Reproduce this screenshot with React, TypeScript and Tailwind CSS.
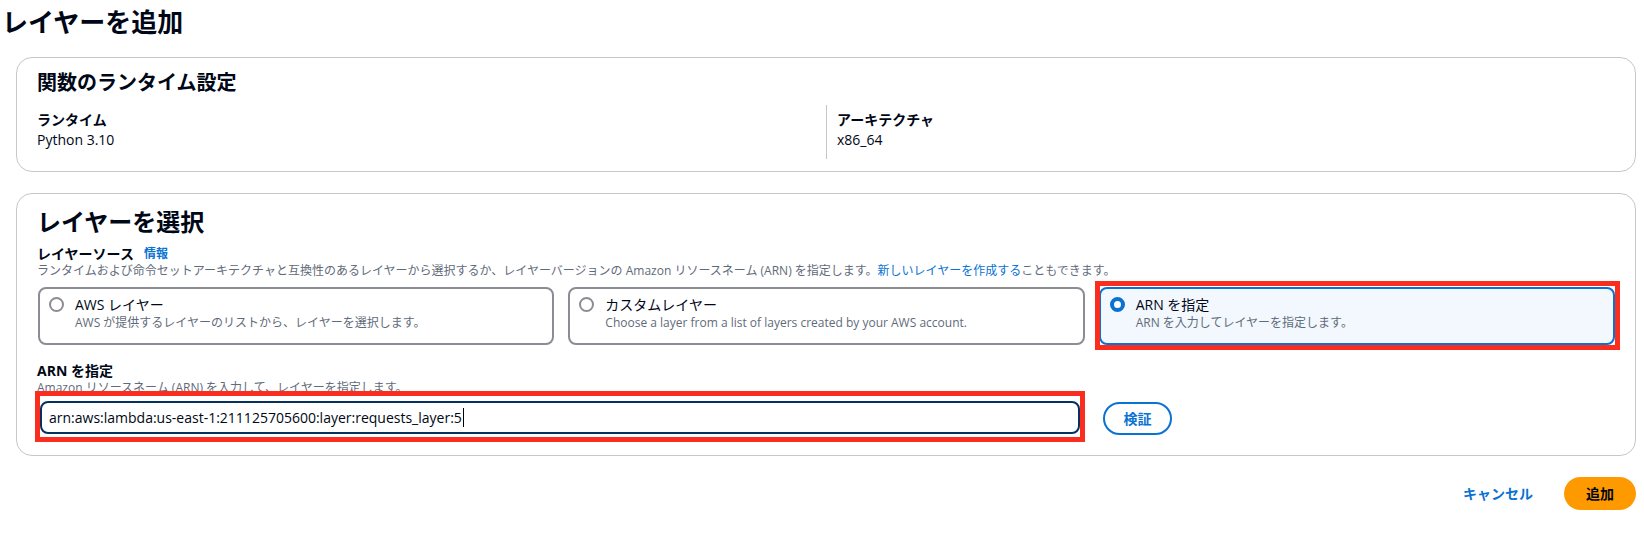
import { useState } from 'react'

const font = { fontFamily: '"Open Sans", "Noto Sans CJK JP", sans-serif' }

type Tile = {
  id: string
  title: string
  description: string
}

const tiles: Tile[] = [
  { id: 'aws', title: 'AWS レイヤー', description: 'AWS が提供するレイヤーのリストから、レイヤーを選択します。' },
  { id: 'custom', title: 'カスタムレイヤー', description: 'Choose a layer from a list of layers created by your AWS account.' },
  { id: 'arn', title: 'ARN を指定', description: 'ARN を入力してレイヤーを指定します。' },
]

function Radio({ checked }: { checked: boolean }) {
  if (checked) {
    return <span className="mt-[2px] block h-[15px] w-[15px] shrink-0 rounded-full border-[4px] border-[#0972d3] bg-white" />
  }
  return <span className="mt-[2px] block h-[15px] w-[15px] shrink-0 rounded-full border-2 border-[#8c8c94] bg-white" />
}

function SourceTile({ tile, selected }: { tile: Tile; selected: boolean }) {
  const box = selected
    ? 'border-2 border-[#0972d3] bg-[#f2f8fd]'
    : 'border-2 border-[#8c8c94] bg-white'

  return (
    <div className="relative">
      <div className={`flex h-[58px] gap-[11px] rounded-[8px] pl-[9px] pt-[6px] ${box}`}>
        <Radio checked={selected} />
        <div>
          <div className="text-[14px] leading-[20px] text-[#000716]">{tile.title}</div>
          <div className="text-[12px] leading-[16px] text-[#5f6b7a]">{tile.description}</div>
        </div>
      </div>
      {selected ? (
        <div className="pointer-events-none absolute -bottom-[5px] -left-[4px] -right-[5px] -top-[6px] border-[5px] border-[#fb2d1e]" />
      ) : null}
    </div>
  )
}

export default function App() {
  const [source] = useState('arn')

  return (
    <div className="min-h-[534px] bg-white text-[#000716]" style={font}>
      <h1 className="pl-[2px] pt-[7px] text-[26px] font-bold leading-[30px]">レイヤーを追加</h1>

      <div className="pl-4 pr-2 pt-[20px]">
        <section className="rounded-[16px] border border-[#c6c6cd] px-[20px] pb-[12px] pt-[13px]">
          <h2 className="text-[20px] font-bold leading-[24px]">関数のランタイム設定</h2>
          <div className="mt-[10px] grid grid-cols-2">
            <div className="pt-[5px]">
              <div className="text-[14px] font-bold leading-[20px]">ランタイム</div>
              <div className="text-[14px] leading-[20px]">Python 3.10</div>
            </div>
            <div className="h-[54px] border-l border-[#c6c6cd] pl-[10px] pt-[5px]">
              <div className="text-[14px] font-bold leading-[20px]">アーキテクチャ</div>
              <div className="text-[14px] leading-[20px]">x86_64</div>
            </div>
          </div>
        </section>

        <section className="mt-[21px] rounded-[16px] border border-[#c6c6cd] px-[20px] pb-[13px] pt-[13px]">
          <h2 className="text-[24px] font-bold leading-[30px]">レイヤーを選択</h2>

          <div className="mt-[8px] flex items-center gap-[10px]">
            <span className="text-[14px] font-bold leading-[18px]">レイヤーソース</span>
            <a className="text-[12px] font-bold leading-[18px] text-[#0972d3]">情報</a>
          </div>
          <p className="text-[12px] leading-[16px] text-[#5f6b7a]">
            ランタイムおよび命令セットアーキテクチャと互換性のあるレイヤーから選択するか、レイヤーバージョンの Amazon リソースネーム (ARN) を指定します。
            <a className="text-[#0972d3]">新しいレイヤーを作成する</a>こともできます。
          </p>

          <div className="mt-[8px] grid grid-cols-3 gap-[14px] pl-[1px]">
            {tiles.map((tile) => (
              <SourceTile key={tile.id} tile={tile} selected={tile.id === source} />
            ))}
          </div>

          <div className="mt-[16px] text-[14px] font-bold leading-[20px]">ARN を指定</div>
          <div className="text-[12px] leading-[14px] text-[#5f6b7a]">
            Amazon リソースネーム (ARN) を入力して、レイヤーを指定します。
          </div>

          <div className="flex items-center gap-[18px]">
            <div className="relative z-10 -ml-[2px] -mt-[4px] w-[1050px] border-[5px] border-[#fb2d1e] bg-white pb-[3px] pt-[5px]">
              <div className="flex h-[33px] items-center rounded-[8px] border-2 border-[#033160] bg-white pl-[7px] text-[14px] text-[#000716]">
                <span>arn:aws:lambda:us-east-1:211125705600:layer:requests_layer:5</span>
                <span className="ml-px inline-block h-[19px] w-px bg-black" />
              </div>
            </div>
            <button className="h-[33px] w-[69px] rounded-full border-2 border-[#0972d3] text-[14px] font-bold text-[#0972d3]">
              検証
            </button>
          </div>
        </section>

        <div className="mt-[21px] flex items-center justify-end gap-[31px]">
          <a className="text-[14px] font-bold text-[#0972d3]">キャンセル</a>
          <button className="h-[33px] w-[72px] rounded-full bg-[#ff9900] text-[14px] font-bold text-[#000716]">
            追加
          </button>
        </div>
      </div>
    </div>
  )
}
